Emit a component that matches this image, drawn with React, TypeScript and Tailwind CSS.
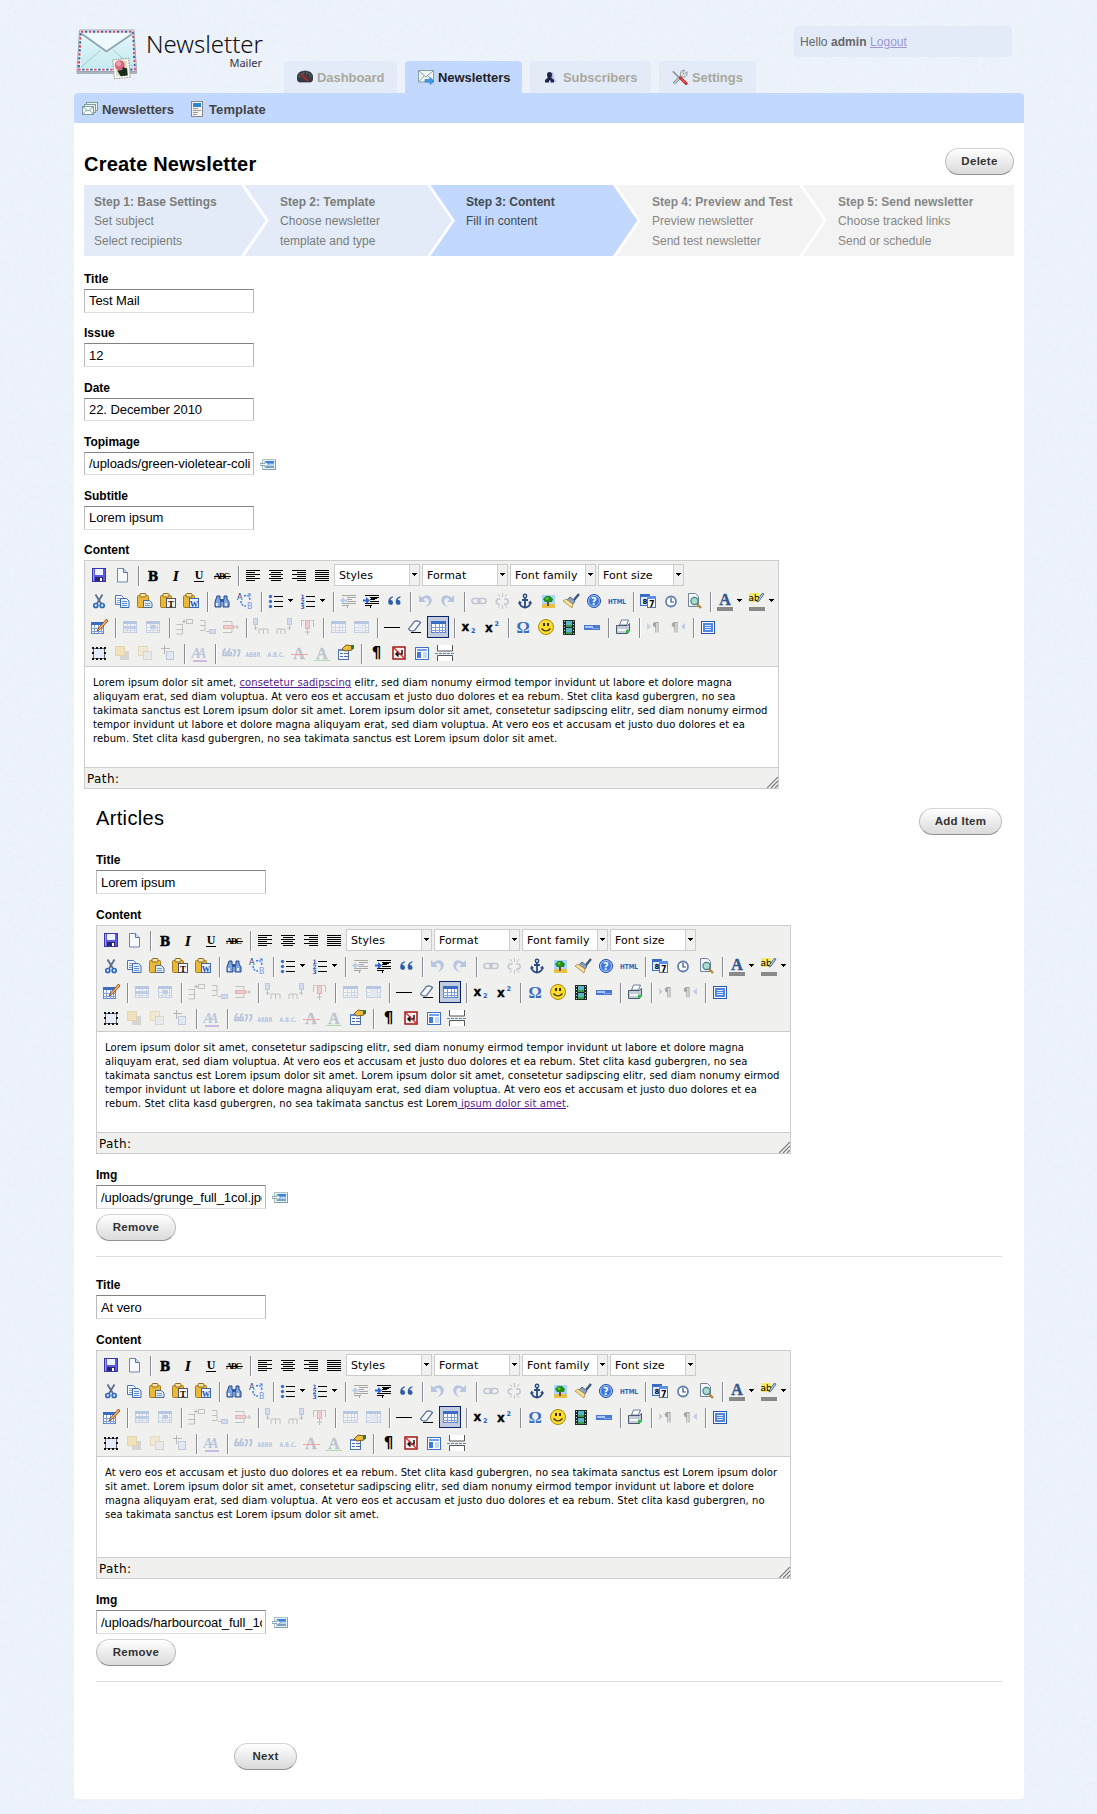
import React from "react";

const SANS = "font-['Liberation_Sans',Arial,sans-serif]";
const VERDANA = "font-['DejaVu_Sans',Verdana,sans-serif]";

const serif = "'Liberation Serif', serif";
const bold = "'DejaVu Serif', serif";
const mono = "'DejaVu Sans', sans-serif";

const R = (x: number, y: number, w: number, h: number, fill: string, key?: string | number) => (
  <rect key={key ?? `${x}-${y}-${w}-${h}`} x={x} y={y} width={w} height={h} fill={fill} shapeRendering="crispEdges" />
);

const lines = (starts: number[], widths: number[]) =>
  starts.map((s, i) => R(s, 5 + i * 2, widths[i], 1, "#000", i));

const clipboard = (
  <>
    <rect x="2.5" y="4.5" width="11" height="12" rx="1" fill="#e9b93c" stroke="#a87b1c" />
    <rect x="5" y="2.5" width="6" height="3.5" rx="1" fill="#f6e3a2" stroke="#8d6b20" />
  </>
);

const table = (x: number, y: number, w: number, h: number, head = "#3b6cc4") => (
  <>
    <rect x={x + 0.5} y={y + 0.5} width={w - 1} height={h - 1} fill="#fff" stroke="#5c83c9" />
    {R(x, y, w, 3, head)}
    {[1, 2, 3].map((i) => R(x + Math.round((w * i) / 4), y + 3, 1, h - 3, "#7f9fda", `v${i}`))}
    {[1, 2].map((i) => R(x, y + 3 + Math.round(((h - 3) * i) / 3), w, 1, "#7f9fda", `h${i}`))}
  </>
);

const cells = (x: number, y: number) => (
  <path d={`M${x} ${y}h10M${x} ${y + 5}h10M${x + 0.5} ${y}v5M${x + 5} ${y}v5M${x + 9.5} ${y}v5`} stroke="#555" fill="none" />
);

const icons: Record<string, React.ReactNode> = {
  save: (
    <>
      <rect x="3.5" y="3.5" width="13" height="13" fill="#5c5ae0" stroke="#3a36a8" />
      {R(6, 4, 8, 6, "#eef2ff")}
      {R(6, 12, 8, 4, "#2a2868")}
      {R(11, 13, 2, 3, "#fff")}
      {R(4, 4, 1, 12, "#9d9bf6")}
    </>
  ),
  newdoc: (
    <>
      <path d="M5.5 3.5h6l4 4v9.500h-10z" fill="#f6faff" stroke="#6d87a8" />
      <path d="M11.500 3.500v4h4" fill="#cfe0f3" stroke="#5c7899" />
    </>
  ),
  bold: <text x="10" y="15.500" fontSize="12.500" fontWeight="900" fontFamily={bold} textAnchor="middle" stroke="#000" strokeWidth=".5">B</text>,
  italic: <text x="10" y="15.500" fontSize="12.500" fontWeight="700" fontStyle="italic" fontFamily={bold} textAnchor="middle">I</text>,
  underline: (
    <>
      <text x="10" y="14" fontSize="12" fontWeight="700" fontFamily={serif} textAnchor="middle">U</text>
      {R(5, 16, 10, 1, "#000")}
    </>
  ),
  strike: (
    <>
      <text x="10" y="14" fontSize="9" fontFamily={serif} fontWeight="700" textAnchor="middle" textLength="16">ABC</text>
      {R(2, 11, 17, 1, "#000")}
    </>
  ),
  left: <>{lines([3, 3, 3, 3, 3, 3], [14, 9, 14, 9, 14, 9])}</>,
  center: <>{lines([3, 5, 3, 5, 3, 5], [14, 10, 14, 10, 14, 10])}</>,
  right: <>{lines([3, 8, 3, 8, 3, 8], [14, 9, 14, 9, 14, 9])}</>,
  full: <>{lines([3, 3, 3, 3, 3, 3], [14, 14, 14, 14, 14, 14])}</>,
  cut: (
    <>
      <path d="M6.500 3.500l5.500 9M13.500 3.500l-5.500 9" stroke="#5a6f8c" strokeWidth="1.800" fill="none" />
      <circle cx="6.800" cy="14.500" r="2" fill="none" stroke="#2a6ac0" strokeWidth="1.700" />
      <circle cx="13.200" cy="14.500" r="2" fill="none" stroke="#2a6ac0" strokeWidth="1.700" />
    </>
  ),
  copy: (
    <>
      <path d="M3.500 4.500h6l2 2v7h-8z" fill="#fff" stroke="#4a76bd" />
      <path d="M5 7.500h4M5 9.500h4M5 11.500h3" stroke="#7d9fd6" />
      <path d="M8.500 7.500h6l2.500 2.500v6.500h-8.500z" fill="#eaf2ff" stroke="#3c69b4" />
      <path d="M10 10.500h5M10 12.500h5M10 14.500h5" stroke="#5d8ad0" />
    </>
  ),
  paste: (
    <>
      {clipboard}
      <path d="M8.500 9.500h6l2.500 2.500v4.500h-8.500z" fill="#dfeaf7" stroke="#4c6c97" />
      <path d="M10 12.500h5M10 14.500h5" stroke="#7e9ac0" />
    </>
  ),
  pastetext: (
    <>
      {clipboard}
      <rect x="8.500" y="7.500" width="9" height="9" fill="#f6f6f6" stroke="#555" />
      <text x="13" y="15.500" fontSize="9" fontWeight="700" fontFamily={serif} textAnchor="middle">T</text>
    </>
  ),
  pasteword: (
    <>
      {clipboard}
      <rect x="8.500" y="7.500" width="9" height="9" fill="#eaf3ff" stroke="#3a6ab5" />
      <text x="13" y="15.500" fontSize="8.500" fontWeight="700" fontFamily={serif} fill="#1c52b0" textAnchor="middle">W</text>
    </>
  ),
  find: (
    <>
      <path d="M5 5h3v3l1 2v6H3v-5zM12 5h3v3l2 3v5h-6v-6l1-2z" fill="#7fa3dd" stroke="#23478c" />
      {R(8, 8, 4, 3, "#2f5aa8")}
      {R(4, 12, 2, 3, "#dfeaff")}
      {R(13, 12, 2, 3, "#dfeaff")}
    </>
  ),
  replace: (
    <>
      <text x="2" y="9" fontSize="8" fontFamily={mono} fill="#23478c">A</text>
      <text x="12" y="18" fontSize="8" fontFamily={mono} fill="#7a9be0">B</text>
      <path d="M9 5q5-2 6 4M6 10q0 5 5 5" stroke="#3d78e6" strokeWidth="1.400" strokeDasharray="2 1.200" fill="none" />
      <path d="M12.500 2.500h3v3z" fill="#3d78e6" />
    </>
  ),
  bullist: (
    <>
      {[5, 10, 15].map((y) => (
        <React.Fragment key={y}>
          <circle cx="4.500" cy={y + 0.5} r="1.700" fill="#3b6fc9" />
          {R(8, y, 9, 1, "#000")}
        </React.Fragment>
      ))}
    </>
  ),
  numlist: (
    <>
      {[5, 10, 15].map((y, i) => (
        <React.Fragment key={y}>
          <text x="2.500" y={y + 2.500} fontSize="6" fontWeight="700" fontFamily={mono} fill="#2c5fc0">{i + 1}</text>
          {R(8, y, 9, 1, "#000")}
        </React.Fragment>
      ))}
    </>
  ),
  outdent: (
    <>
      {[4, 6, 8, 10, 12, 14].map((y, i) => R([4, 9, 9, 9, 4, 4][i], y, [14, 9, 5, 9, 14, 7][i], 1, "#000", y))}
      {R(9, 15, 1, 2, "#000")}
      <path d="M2 9.500l4-3.500v2.500h3v2h-3V13z" fill="#3d78e6" />
    </>
  ),
  indent: (
    <>
      {[4, 6, 8, 10, 12, 14].map((y, i) => R([4, 9, 9, 9, 4, 4][i], y, [14, 9, 5, 9, 14, 7][i], 1, "#000", y))}
      {R(9, 15, 1, 2, "#000")}
      {R(10, 7, 6, 1, "#000")}
      <path d="M9 9.500L5 6v2.500H2v2h3V13z" fill="#2f63d0" />
    </>
  ),
  quote: (
    <path d="M9 5.200Q4 6 4.200 11.500a2.400 2.400 0 1 0 2-2.400Q6.500 7 9 6.200zM16.500 5.200q-5 .8-4.800 6.300a2.400 2.400 0 1 0 2-2.400q.3-2.100 2.800-2.900z" fill="#2f5da8" />
  ),
  undo: <path d="M4 4v7h7l-2.500-2.500q3-3 5 .5 1.500 4-4 7.500 9-3 7-9-3-6-10-1z" fill="#3465c8" />,
  redo: <path d="M16 4v7H9l2.500-2.500q-3-3-5 .5-1.500 4 4 7.500-9-3-7-9 3-6 10-1z" fill="#3465c8" />,
  link: (
    <>
      <rect x="3" y="7.500" width="8" height="5" rx="2.500" fill="none" stroke="#54699a" strokeWidth="1.600" />
      <rect x="9" y="7.500" width="8" height="5" rx="2.500" fill="none" stroke="#54699a" strokeWidth="1.600" />
    </>
  ),
  unlink: (
    <>
      <path d="M8.500 8H5.500q-2.500 2.500 0 5h2M12 8h3q2.500 2.500 0 5h-3" fill="none" stroke="#54699a" strokeWidth="1.600" />
      <path d="M10.500 2v4M6 3l2 3M15 3l-2 3M10.500 14v4M6 17l2-3M15 17l-2-3" stroke="#666" />
    </>
  ),
  anchor: (
    <>
      <circle cx="10" cy="5" r="1.700" fill="none" stroke="#2a4c80" strokeWidth="1.400" />
      <path d="M10 7v9M7 9h6M4.500 11q.5 5 5.500 5.500 5-.5 5.500-5.500" fill="none" stroke="#2a4c80" strokeWidth="1.800" />
      <path d="M3 13l1.500-3.500L7 12zM17 13l-1.500-3.500L13 12z" fill="#2a4c80" />
    </>
  ),
  image: (
    <>
      {R(4, 4, 13, 13, "#a9d4ff")}
      {R(4, 13, 13, 4, "#e7c04a")}
      {R(9, 10, 2, 5, "#7a4a14")}
      <path d="M5 8l3-3h4l3 3-1 3H7z" fill="#238a1b" />
      <circle cx="9" cy="7.500" r="1.500" fill="#57c63c" />
    </>
  ),
  cleanup: (
    <>
      <path d="M18 3l-5 6" stroke="#3f5878" strokeWidth="2.400" />
      <path d="M9 6l5 4-2 3-6-4z" fill="#8aa3c6" stroke="#4c6488" />
      <path d="M5 8l7 5-1 4-9-7z" fill="#f3dea0" stroke="#b08b3a" strokeWidth=".8" />
    </>
  ),
  help: (
    <>
      <circle cx="10" cy="10" r="6.500" fill="#3b78e0" stroke="#1d4ca8" />
      <circle cx="10" cy="10" r="5.500" fill="none" stroke="#cfe0ff" strokeWidth=".8" />
      <text x="10" y="13.800" fontSize="10" fontWeight="700" fontFamily={mono} fill="#fff" textAnchor="middle">?</text>
    </>
  ),
  html: <text x="10" y="13" fontSize="7" fontWeight="700" fontFamily={mono} fill="#2b62b8" textAnchor="middle" textLength="18" lengthAdjust="spacingAndGlyphs">HTML</text>,
  date: (
    <>
      <rect x="2.500" y="3.500" width="9" height="11" fill="#e5eeff" stroke="#3b6cc4" />
      {R(2, 3, 10, 3, "#3b6cc4")}
      <text x="4.500" y="13" fontSize="7" fontWeight="700" fontFamily={mono}>8</text>
      <rect x="9.500" y="5.500" width="8" height="11" fill="#fff" stroke="#5b6f90" />
      {R(9, 5, 9, 3, "#5d90e8")}
      <text x="11" y="15.500" fontSize="8" fontWeight="700" fontFamily={mono}>7</text>
    </>
  ),
  time: (
    <>
      <circle cx="10" cy="10.500" r="5" fill="#fff" stroke="#6480b0" strokeWidth="1.800" />
      <path d="M10 7v4h3" fill="none" stroke="#33507f" strokeWidth="1.200" />
    </>
  ),
  preview: (
    <>
      <path d="M4.500 2.500h7l3 3v10h-10z" fill="#f4f8fc" stroke="#72849c" />
      <path d="M12 12l5 5" stroke="#b98634" strokeWidth="2.400" />
      <circle cx="10.500" cy="10" r="3.600" fill="#a9dcd0" stroke="#4d7d86" strokeWidth="1.200" />
    </>
  ),
  fore: (
    <>
      <text x="10" y="13.500" fontSize="16" fontWeight="700" fontFamily={serif} fill="#33578f" stroke="#33578f" strokeWidth=".4" textAnchor="middle">A</text>
      {R(2, 16, 16, 4, "#8a8a8a")}
    </>
  ),
  back: (
    <>
      {R(2, 2, 10, 9, "#f5e96a")}
      <text x="1.500" y="10" fontSize="9" fontFamily={mono}>ab</text>
      <path d="M17 3l-5 7-2 1 1-2.500 4-6z" fill="#cfe0f3" stroke="#48628a" />
      {R(2, 16, 16, 4, "#8a8a8a")}
    </>
  ),
  table: (
    <>
      {table(2, 5, 13, 12)}
      <path d="M17.500 2l-8 9-1.500 3 3-1.500 8-8.500z" fill="#eab06a" stroke="#7d3c14" strokeWidth=".8" />
    </>
  ),
  rowprops: <>{table(3, 4, 14, 12)}{R(3, 9, 14, 3, "#4d7fd8")}</>,
  cellprops: <>{table(3, 4, 14, 12)}{R(8, 8, 5, 4, "#4d7fd8")}</>,
  rowbefore: <path d="M2.500 7.500h6M2.500 12.500h6M2.500 17h6M8.500 7v10M8 4.500h4M10 2.500v4M12.500 2.500h6v4h-6z" stroke="#555" fill="none" />,
  rowafter: <><path d="M3 3.500h5M3 8.500h5M3 13.500h5M8 3.500v10M9 14.500h4" stroke="#555" fill="none" /><rect x="12.500" y="12.500" width="6" height="4" fill="#8fb1ef" stroke="#4c70b8" /></>,
  delrow: <><path d="M3 4.500h9M3 15.500h9M12 4.500v3M12 12.500v3M14 10h5M17 8v4" stroke="#555" fill="none" /><rect x="3.500" y="8.500" width="10" height="3" fill="#f08080" stroke="#c03030" /></>,
  colbefore: <><rect x="2.500" y="1.500" width="4" height="6" fill="#8fb1ef" stroke="#4c70b8" /><path d="M4.500 8v5M3 11h4M8 17v-5h9v5M12.500 12v5" stroke="#555" fill="none" /></>,
  colafter: <><rect x="13.500" y="1.500" width="4" height="6" fill="#8fb1ef" stroke="#4c70b8" /><path d="M15.500 8v5M13 11h4M3 17v-5h8v5M7 12v5" stroke="#555" fill="none" /></>,
  delcol: <><rect x="8.500" y="3.500" width="4" height="8" fill="#f08080" stroke="#c03030" /><path d="M4.500 10V3.500h3M16.500 10V3.500h-3M10.500 12v6M8 15h5" stroke="#555" fill="none" /></>,
  splitcells: <>{table(3, 4, 15, 12)}</>,
  mergecells: <>{table(3, 4, 15, 12)}{R(7, 8, 7, 7, "#c6d8f8")}</>,
  hr: <>{R(2, 10, 16, 1, "#000")}</>,
  eraser: (
    <>
      <path d="M3.500 12l6-7.500q3-1.500 6 1l-6 8q-4 1.500-6-1.500z" fill="#f2f7ff" stroke="#50658a" strokeWidth="1.200" />
      {R(6, 15, 10, 1, "#000")}
    </>
  ),
  visual: <>{table(3, 4, 15, 12)}</>,
  sub: (
    <>
      <text x="2.500" y="14" fontSize="12" fontWeight="700" fontFamily={mono} stroke="#000" strokeWidth=".3">x</text>
      <text x="12" y="16" fontSize="6.500" fontWeight="700" fontFamily={mono} fill="#2c5fc0">2</text>
    </>
  ),
  sup: (
    <>
      <text x="3" y="15" fontSize="12" fontWeight="700" fontFamily={mono} stroke="#000" strokeWidth=".3">x</text>
      <text x="12.500" y="8.500" fontSize="6.500" fontWeight="700" fontFamily={mono} fill="#2c5fc0">2</text>
    </>
  ),
  omega: <text x="10" y="15.500" fontSize="16.500" fontWeight="700" fontFamily={serif} fill="#3a6cc4" textAnchor="middle">Ω</text>,
  smile: (
    <>
      <circle cx="10" cy="10" r="7.500" fill="#fcdc2c" stroke="#a98a10" />
      {R(7, 6, 2, 3, "#3a2c00")}
      {R(11, 6, 2, 3, "#3a2c00")}
      <path d="M5.500 11.500q4.500 5 9 0" fill="none" stroke="#3a2c00" strokeWidth="1.200" />
    </>
  ),
  media: (
    <>
      {R(4, 3, 12, 15, "#1c2b26")}
      {R(7, 4, 6, 6, "#58b7c6")}
      {R(7, 11, 6, 6, "#58b7c6")}
      {R(7, 8, 6, 2, "#3f9c4c", "g1")}
      {R(7, 15, 6, 2, "#3f9c4c", "g2")}
      {[4, 7, 10, 13, 16].map((y) => R(5, y, 1, 1, "#cfd8d5", y))}
      {[4, 7, 10, 13, 16].map((y) => R(14, y, 1, 1, "#cfd8d5", `r${y}`))}
    </>
  ),
  advhr: (
    <>
      {R(2, 8, 16, 5, "#4a78d0")}
      {R(3, 9, 8, 2, "#a9c6ff")}
      {R(10, 11, 7, 1, "#7fa8f0")}
    </>
  ),
  print: (
    <>
      <path d="M6.500 8l2-5h7l-2 5z" fill="#fff" stroke="#6a7f9c" />
      <path d="M3.500 8.500h11l2-2v7l-2 3h-11z" fill="#c3cbd6" stroke="#48586e" />
      {R(5, 12, 8, 2, "#f7f7f7")}
      {R(13, 13, 3, 3, "#35b94a")}
    </>
  ),
  ltr: <><path d="M3 6l4 3.500-4 3.500z" fill="#6a90cf" /><text x="8" y="14" fontSize="12" fontWeight="700" fontFamily={mono}>¶</text></>,
  rtl: <><path d="M18 6l-4 3.500 4 3.500z" fill="#4a7ad8" /><text x="4" y="14" fontSize="12" fontWeight="700" fontFamily={mono}>¶</text></>,
  fullscreen: (
    <>
      <rect x="3.500" y="4.500" width="13" height="12" fill="#fff" stroke="#2a56b0" />
      {R(5, 6, 10, 9, "#4f86e6")}
      {[8, 10, 12].map((y) => R(7, y, 6, 1, "#dbe7ff", y))}
    </>
  ),
  layer: (
    <>
      <rect x="4.500" y="5.500" width="11" height="10" fill="#e3edff" stroke="#666" />
      {[[3, 4], [15, 4], [3, 15], [15, 15], [7, 4], [11, 4], [7, 15], [11, 15], [3, 9], [15, 9]].map(([x, y]) => R(x, y, 2, 2, "#111"))}
    </>
  ),
  forward: <>{R(8, 8, 9, 9, "#9a9a9a")}<rect x="3.500" y="3.500" width="9" height="9" fill="#f3c64a" stroke="#c99a2a" /></>,
  backward: <><rect x="3.500" y="3.500" width="9" height="9" fill="#f3dc9a" stroke="#c9aa5a" />{R(8, 8, 9, 9, "#b99a5a")}{R(9, 9, 7, 7, "#d8dce8")}</>,
  absolute: <><rect x="8.500" y="8.500" width="7" height="8" fill="#c7dcff" stroke="#4c70b8" /><path d="M3 5.500h9M6.500 2v9" stroke="#333" /></>,
  styleprops: (
    <>
      <text x="10" y="15" fontSize="14" fontStyle="italic" fontWeight="700" fontFamily={serif} fill="#4468b0" textAnchor="middle" textLength="15">AA</text>
      {R(4, 17, 14, 2, "#7a3cc8")}
    </>
  ),
  cite: <path d="M5.500 5.500q-2.500 2-2.500 7h3v-3H4.500M10.500 5.500q-2.500 2-2.500 7h3v-3H9.500M12.500 7h2.500q.5 4-2 6.500M17 7h2.500q.5 4-2 6.500" stroke="#2d5fae" strokeWidth="1.700" fill="none" />,
  abbr: <text x="10" y="13.500" fontSize="6.500" fontWeight="700" fontFamily={mono} fill="#2b5fb8" textAnchor="middle" textLength="15" lengthAdjust="spacingAndGlyphs">ABBR</text>,
  acronym: <text x="10" y="13.500" fontSize="6.500" fontWeight="700" fontFamily={mono} fill="#2b5fb8" textAnchor="middle" textLength="17" lengthAdjust="spacingAndGlyphs">A.B.C.</text>,
  del: (
    <>
      <text x="10" y="15.500" fontSize="16" fontWeight="700" fontFamily={serif} fill="#4a5f84" stroke="#4a5f84" strokeWidth=".4" textAnchor="middle">A</text>
      {R(2, 11, 17, 1, "#ff0000")}
    </>
  ),
  ins: (
    <>
      <text x="10" y="15.500" fontSize="16" fontWeight="700" fontFamily={serif} fill="#4a6888" stroke="#4a6888" strokeWidth=".4" textAnchor="middle">A</text>
      {R(2, 17, 16, 1, "#18b018")}
    </>
  ),
  attribs: (
    <>
      <rect x="3.500" y="6.500" width="10" height="10" fill="#f3f8ff" stroke="#4c70a8" />
      {R(3, 6, 11, 2, "#5c8ad8")}
      <path d="M5 10.500h3M9 10.500h4M5 13.500h3M9 13.500h4" stroke="#4c6ca0" />
      <path d="M7 6l4-4 7 1-1 4-7 1z" fill="#ecbd3f" stroke="#7c5a14" />
      {R(16, 2, 3, 4, "#2e7b35")}
    </>
  ),
  visualchars: <text x="10.500" y="15" fontSize="15" fontWeight="700" fontFamily={mono} textAnchor="middle">¶</text>,
  nonbreaking: (
    <>
      <rect x="4" y="4" width="12" height="12" fill="#fbeeee" stroke="#a01818" strokeWidth="1.500" />
      <path d="M13 7v4H8M9.500 8.500L7 11l2.500 2.500" fill="none" stroke="#111" strokeWidth="1.500" />
      <path d="M4 4l12 12" stroke="#d02828" strokeWidth="1.300" />
    </>
  ),
  template: (
    <>
      <rect x="3.500" y="4.500" width="13" height="12" fill="#fff" stroke="#3f70c4" />
      {R(5, 6, 10, 2, "#6fa0ee")}
      {R(5, 9, 4, 6, "#3f7ae0")}
      {R(11, 9, 4, 6, "#c3d8f8")}
    </>
  ),
  pagebreak: (
    <>
      <path d="M2.500 2v6h15V2M2.500 18v-5.500h15V18" fill="#fff" stroke="#555" />
      <path d="M0 10.500h20" stroke="#5a86c0" strokeDasharray="3 1" />
    </>
  ),
};

const toolbar: string[][] = [
  ["save", "newdoc", "|", "bold", "italic", "underline", "strike", "|", "left", "center", "right", "full", "#Styles", "#Format", "#Font family", "#Font size"],
  ["cut", "copy", "paste", "pastetext", "pasteword", "|", "find", "replace", "|", "bullist>", "numlist>", "|", "~outdent", "indent", "quote", "|", "~undo", "~redo", "|", "~link", "~unlink", "anchor", "image", "cleanup", "help", "html", "|", "date", "time", "preview", "|", "fore>", "back>"],
  ["table", "|", "~rowprops", "~cellprops", "|", "~rowbefore", "~rowafter", "~delrow", "|", "~colbefore", "~colafter", "~delcol", "|", "~splitcells", "~mergecells", "|", "hr", "eraser", "*visual", "|", "sub", "sup", "|", "omega", "smile", "media", "advhr", "|", "print", "|", "~ltr", "~rtl", "|", "fullscreen"],
  ["layer", "~forward", "~backward", "~absolute", "|", "~styleprops", "|", "~cite", "~abbr", "~acronym", "~del", "~ins", "attribs", "|", "visualchars", "nonbreaking", "template", "pagebreak"],
];

function Arrow() {
  return (
    <svg width="7" height="4" viewBox="0 0 7 4" shapeRendering="crispEdges">
      <path d="M1 0h5v1H1zM2 1h3v1H2zM3 2h1v1H3z" fill="#000" />
    </svg>
  );
}

function Tool({ spec }: { spec: string }) {
  if (spec === "|") {
    return <span className="mt-0.5 mr-0.5 ml-1 h-5 w-0.5 border-l border-r border-l-[#8b8b94] border-r-white" />;
  }
  if (spec[0] === "#") {
    return (
      <button className={`mr-0.5 flex h-[22px] w-[86px] border border-[#ccc] bg-white text-left text-[11px] ${VERDANA}`}>
        <span className="flex-1 pl-1 leading-[22px] tracking-[0.1px] whitespace-nowrap">{spec.slice(1)}</span>
        <span className="flex h-5 w-2.5 items-center justify-center border-l border-[#ccc] bg-[#f0f0ee]">
          <Arrow />
        </span>
      </button>
    );
  }
  const split = spec.endsWith(">");
  const disabled = spec[0] === "~";
  const active = spec[0] === "*";
  const name = spec.replace(/[~*>]/g, "");
  return (
    <button className={split ? "flex w-8 items-center" : "mr-px flex"}>
      <span className={`size-[22px] border ${active ? "border-[#0a246a] bg-[#c2cbe0]" : "border-transparent"}`}>
        <svg width="20" height="20" viewBox="0 0 20 20" className={disabled ? "opacity-30" : ""} overflow="visible">
          {icons[name]}
        </svg>
      </span>
      {split && <Arrow />}
    </button>
  );
}

function Editor({ children }: { children: React.ReactNode }) {
  return (
    <div className={`flex h-[229px] w-[695px] flex-col border border-[#ccc] bg-white text-black ${VERDANA}`}>
      <div className="h-[106px] border-b border-[#ccc] bg-[#f0f0ee] pt-[3px] pl-[3px]">
        {toolbar.map((row, i) => (
          <div key={i} className="flex h-[26px] items-start">
            {row.map((t, j) => (
              <Tool key={j} spec={t} />
            ))}
          </div>
        ))}
      </div>
      <div className="flex-1 pt-[9px] pl-2 text-[10px] leading-[14px] tracking-[0.086px] whitespace-nowrap">{children}</div>
      <div className="relative h-[21px] border-t border-[#ccc] bg-[#f0f0ee] pl-0.5 text-[12px] leading-[22px] tracking-[0.4px]">
        Path:
        <svg className="absolute right-0 bottom-0" width="11" height="11" viewBox="0 0 11 11">
          <path d="M0 11L11 0M4 11l7-7M8 11l3-3" stroke="#777" strokeWidth="1.200" />
        </svg>
      </div>
    </div>
  );
}

function Label({ children }: { children: React.ReactNode }) {
  return <label className="block h-[17px] text-[12px] leading-[15px] font-bold text-black">{children}</label>;
}

function BrowseIcon() {
  return (
    <svg className="mt-[7px] ml-1.5" width="16" height="11" viewBox="0 0 16 11">
      <rect x="2.500" y=".5" width="13" height="10" fill="#e9f3f3" stroke="#a9c4c6" />
      <path d="M15.500 1v9.500h-13" fill="none" stroke="#7fa0aa" />
      {R(5, 2, 9, 7, "#6ea6ee")}
      {R(5, 2, 9, 2, "#3f7fe0")}
      {R(5, 5, 9, 2, "#b4d4f6")}
      {R(5, 7, 9, 2, "#7f9fc4")}
      <path d="M0 4.500h5V2.500L8.500 5.500 5 8.500V6.500H0z" fill="#f3fbfa" stroke="#6f949c" strokeWidth=".8" />
    </svg>
  );
}

function Field({ label, value, browse }: { label: string; value: string; browse?: boolean }) {
  return (
    <div className="h-[54.25px]">
      <Label>{label}</Label>
      <div className="flex">
        <input
          defaultValue={value}
          className="h-[23.500px] w-[170px] border border-t-[#828282] border-r-[#bbb] border-b-[#ddd] border-l-[#bbb] bg-white pr-[3px] pl-1 text-[13px] tracking-[-0.07px] text-black outline-none"
        />
        {browse && <BrowseIcon />}
      </div>
    </div>
  );
}

function Pill({ children, className }: { children: React.ReactNode; className: string }) {
  return (
    <button
      className={`h-[27px] shrink-0 rounded-[14px] border border-[#bbb] border-t-[#d4d4d4] border-b-[#909090] bg-linear-to-b from-white to-[#dadada] text-[11.500px] leading-[25px] font-bold tracking-[0.3px] text-[#333] ${className}`}
    >
      {children}
    </button>
  );
}

const steps = [
  { title: "Step 1: Base Settings", a: "Set subject", b: "Select recipients", box: "bg-[#e3ebf8] text-[#7b7d7a]", own: "#e3ebf8" },
  { title: "Step 2: Template", a: "Choose newsletter", b: "template and type", box: "bg-[#e3ebf8] text-[#7b7d7a]", own: "#e3ebf8" },
  { title: "Step 3: Content", a: "Fill in content", b: "", box: "bg-[#c3d8ff] text-[#3f4a4a]", own: "#c3d8ff" },
  { title: "Step 4: Preview and Test", a: "Preview newsletter", b: "Send test newsletter", box: "bg-[#f3f3f3] text-[#868886]", own: "#f3f3f3" },
  { title: "Step 5: Send newsletter", a: "Choose tracked links", b: "Send or schedule", box: "bg-[#f3f3f3] text-[#868886]", own: "#f3f3f3" },
];

function Steps() {
  return (
    <div className="flex h-[71px]">
      {steps.map((s, i) => (
        <div key={s.title} className={`relative w-[186px] pt-2 pl-2.5 text-[12px] leading-5 whitespace-nowrap ${s.box}`}>
          <div className="h-[19px] leading-[19px] font-bold">{s.title}</div>
          <div className="-mt-px tracking-[0.04px]">{s.a}</div>
          <div>{s.b}</div>
          {i < steps.length - 1 && (
            <svg className="absolute top-0 right-0" width="29" height="71" viewBox="0 0 29 71">
              <rect width="29" height="71" fill={steps[i + 1].own} />
              <path d="M0 0l24.500 35.500L0 71z" fill={s.own} />
              <path d="M0 0h3.500L28 35.500 3.500 71H0l24.500-35.500z" fill="#fff" />
            </svg>
          )}
        </div>
      ))}
    </div>
  );
}

function Logo() {
  return (
    <div className="flex w-[210px]">
      <svg className="mt-7 ml-0.5" width="62" height="52" viewBox="0 0 62 52">
        <defs>
          <linearGradient id="paper" x1="0" y1="0" x2="0" y2="1">
            <stop offset="0" stopColor="#e2f6fb" />
            <stop offset="1" stopColor="#c5ebf0" />
          </linearGradient>
        </defs>
        <path d="M3.500 2h54.500l3 43H.5z" fill="#7d8b92" opacity=".6" transform="translate(0 1)" />
        <path d="M3.500 2h54.500l2.500 41.500H1z" fill="#eef9fb" stroke="#8d9da6" strokeWidth=".8" />
        <path d="M4.800 3.800h52l2 37.800H2.700z" fill="none" stroke="#d94a5c" strokeWidth="2" strokeDasharray="2.500 5.500" />
        <path d="M4.800 3.800h52l2 37.800H2.700z" fill="none" stroke="#3a62ae" strokeWidth="2" strokeDasharray="2.500 5.500" strokeDashoffset="4" />
        <path d="M6 5h50l1.500 35.500H4.500z" fill="url(#paper)" />
        <path d="M5 39l20-17M57 39L37 22" stroke="#aacbd1" fill="none" />
        <path d="M6 5l24.500 18L56 5z" fill="#eefafd" />
        <path d="M6 6l24.500 17.500L56 6" fill="none" stroke="#8fa3ae" strokeWidth="1.800" />
        <g transform="rotate(-5 46 40)">
          <rect x="37.500" y="31" width="16" height="19" fill="#faf8f0" stroke="#8e8e8e" strokeWidth="1" strokeDasharray="1.500 1" />
          <rect x="39.500" y="33" width="12" height="15" fill="#dfe0c8" />
          <circle cx="44" cy="37" r="5" fill="#d8647e" />
          <circle cx="43" cy="35.500" r="2.500" fill="#efa0b2" />
          <path d="M41 42l3 6h7v-7l-4-2-1 3z" fill="#1a2c1c" />
        </g>
      </svg>
      <div className="mt-7 ml-2 w-[116px] text-right font-['Noto_Sans',sans-serif] text-[#111]">
        <div className="text-[24px] leading-[32px] font-light whitespace-nowrap">Newsletter</div>
        <div className="-mt-0.5 text-[11px] leading-[10px] text-[#334]">Mailer</div>
      </div>
    </div>
  );
}

const tabIcons = {
  dashboard: (
    <svg width="16" height="16" viewBox="0 0 16 16">
      <path d="M0 8q1-6 8-6t8 6q0 4-2 5H2Q0 12 0 8z" fill="#3a3d42" stroke="#222" strokeWidth=".6" />
      <path d="M2 8q1-4 6-4t6 4" fill="none" stroke="#9a9da2" strokeDasharray="1 2" />
      <path d="M4 5l7 7" stroke="#e02020" strokeWidth="1.300" />
    </svg>
  ),
  newsletters: (
    <svg width="16" height="16" viewBox="0 0 16 16">
      <rect x=".5" y="1.500" width="15" height="11.500" fill="#eef4f4" stroke="#8aa0a4" />
      <path d="M1 2l7 6 7-6M1 12.500L6 7M15 12.500L10 7" fill="none" stroke="#8aa0a4" />
      <path d="M7 10.500h5V8.500l4 3.500-4 3.500V13H7z" fill="#3f9be8" stroke="#1f6ec0" strokeWidth=".6" />
    </svg>
  ),
  subscribers: (
    <svg width="16" height="16" viewBox="0 0 16 16">
      <path d="M8 3.500q3-1 3 2v3l2.500 4.500H9z" fill="#a9c4e4" />
      <circle cx="6.500" cy="5.500" r="2.500" fill="#23234a" />
      <path d="M4.500 6h4v3l2.500 2v2.500H7.500v-2h-1.500v2H2V11l2.500-2z" fill="#23234a" />
    </svg>
  ),
  settings: (
    <svg width="17" height="17" viewBox="0 0 17 17">
      <path d="M1 2l8 8" stroke="#8b9094" strokeWidth="1.600" />
      <path d="M2 15L12 5" stroke="#7c8286" strokeWidth="3" />
      <path d="M2 15L12 5" stroke="#dde1e3" strokeWidth="1.200" />
      <path d="M15.500 2.500l-2.500 2.500-1.500-1.500 2-2.500q-4-1-4.500 3t3.500 4 3.500-5.500z" fill="#dde1e3" stroke="#7c8286" strokeWidth=".8" />
      <path d="M9 9l6 6" stroke="#c41f1f" strokeWidth="3" strokeLinecap="round" />
      <path d="M9.500 9.500l5 5" stroke="#f58080" strokeWidth="1" />
    </svg>
  ),
};

function Tab({ icon, label, width, active }: { icon: React.ReactNode; label: string; width: string; active?: boolean }) {
  return (
    <a className={`flex h-8 items-center gap-1 rounded-t-[4px] pl-[13px] text-[13px] font-bold tracking-[-0.06px] ${width} ${active ? "bg-[#c3d8ff] text-[#222]" : "bg-[#e3ebf8] text-[#aaa89d]"}`}>
      <span className="flex w-4">{icon}</span>
      <span className="mt-0.5">{label}</span>
    </a>
  );
}

function Article({ title, img, children }: { title: string; img: string; children: React.ReactNode }) {
  return (
    <section className="h-[425px]">
      <div className="h-[55px]">
        <Field label="Title" value={title} />
      </div>
      <Label>Content</Label>
      <Editor>{children}</Editor>
      <div className="mt-3.5 h-[46px]">
        <Field label="Img" value={img} browse />
      </div>
      <Pill className="w-20">Remove</Pill>
      <hr className="mt-[15px] border-[#ddd]" />
    </section>
  );
}

const Link = ({ children }: { children: React.ReactNode }) => <a className="text-[#551a8b] underline">{children}</a>;

export default function App() {
  return (
    <div className={`relative h-[1814px] w-[1097px] overflow-hidden bg-[#eef3fb] ${SANS}`}>
      <svg className="absolute inset-0" width="1097" height="1814">
        <filter id="grain" x="0" y="0" width="100%" height="100%">
          <feTurbulence type="fractalNoise" baseFrequency="0.28" numOctaves="3" seed="4" stitchTiles="stitch" />
          <feColorMatrix values="0 0 0 0 .8  0 0 0 0 .86  0 0 0 0 .94  1.300 0 0 0 -.45" />
        </filter>
        <rect width="1097" height="1814" filter="url(#grain)" />
      </svg>
      <div className="relative ml-[74px] w-[950px]">
        <header className="flex h-[93px]">
          <Logo />
          <nav className="flex items-end gap-2">
            <Tab icon={tabIcons.dashboard} label="Dashboard" width="w-[113px]" />
            <Tab icon={tabIcons.newsletters} label="Newsletters" width="w-[117px]" active />
            <Tab icon={tabIcons.subscribers} label="Subscribers" width="w-[121px]" />
            <Tab icon={tabIcons.settings} label="Settings" width="w-[97px]" />
          </nav>
          <div className="mt-[26px] mr-3 ml-auto h-[31px] w-[218px] rounded-[4px] bg-[#e3ebf8] pl-1.5 text-[12px] leading-8 tracking-[0.05px] text-[#666]">
            Hello <b>admin</b> <a className="text-[#9d97d6] underline">Logout</a>
          </div>
        </header>
        <nav className="flex h-[30px] rounded-t-[4px] bg-[#c3d8ff] pl-2 text-[13px] leading-[33px] font-bold text-[#444]">
          <svg className="mt-2 mr-1" width="16" height="16" viewBox="0 0 16 16">
            <rect x="4.500" y="1.500" width="11" height="8" fill="#eef6f4" stroke="#7f9a9a" />
            <rect x="2.500" y="3.500" width="11" height="8" fill="#eef6f4" stroke="#7f9a9a" />
            <rect x=".5" y="5.500" width="11" height="8" fill="#f4faf8" stroke="#7f9a9a" />
            <path d="M1 6l5 4 5-4M1 13l3.500-4M11 13L7.500 9" fill="none" stroke="#8aa5a5" />
          </svg>
          <span className="w-[89px] tracking-[-0.1px]">Newsletters</span>
          <svg className="mt-2 mr-1.5" width="12" height="16" viewBox="0 0 12 16">
            <rect x=".5" y=".5" width="11" height="15" fill="#f4f4f2" stroke="#888" />
            {R(2, 2, 8, 4, "#2f86d0")}
            {R(2, 7, 5, 1, "#999")}
            {R(2, 9, 8, 1, "#999")}
            {R(2, 11, 5, 1, "#999")}
            {R(2, 13, 4, 1, "#999")}
          </svg>
          <span className="tracking-[0.1px]">Template</span>
        </nav>
        <main className="h-[1676px] rounded-b-[4px] bg-white px-2.5">
          <div className="flex h-[62px] justify-between pt-[25px]">
            <h1 className="mt-1 text-[20px] leading-[24px] font-bold tracking-[0.2px] text-black">Create Newsletter</h1>
            <Pill className="w-[69px]">Delete</Pill>
          </div>
          <Steps />
          <div className="pt-4">
            <Field label="Title" value="Test Mail" />
            <Field label="Issue" value="12" />
            <Field label="Date" value="22. December 2010" />
            <Field label="Topimage" value="/uploads/green-violetear-colibri.jpg" browse />
            <Field label="Subtitle" value="Lorem ipsum" />
            <Label>Content</Label>
            <Editor>
              <p>Lorem ipsum dolor sit amet, <Link>consetetur sadipscing</Link> elitr, sed diam nonumy eirmod tempor invidunt ut labore et dolore magna</p>
              <p>aliquyam erat, sed diam voluptua. At vero eos et accusam et justo duo dolores et ea rebum. Stet clita kasd gubergren, no sea</p>
              <p>takimata sanctus est Lorem ipsum dolor sit amet. Lorem ipsum dolor sit amet, consetetur sadipscing elitr, sed diam nonumy eirmod</p>
              <p>tempor invidunt ut labore et dolore magna aliquyam erat, sed diam voluptua. At vero eos et accusam et justo duo dolores et ea</p>
              <p>rebum. Stet clita kasd gubergren, no sea takimata sanctus est Lorem ipsum dolor sit amet.</p>
            </Editor>
          </div>
          <div className="px-3">
            <div className="flex h-16 justify-between pt-[19px]">
              <h2 className="-mt-0.5 text-[20px] leading-[24px] tracking-[0.35px] text-black">Articles</h2>
              <Pill className="w-[83px]">Add Item</Pill>
            </div>
            <Article title="Lorem ipsum" img="/uploads/grunge_full_1col.jpg">
              <p>Lorem ipsum dolor sit amet, consetetur sadipscing elitr, sed diam nonumy eirmod tempor invidunt ut labore et dolore magna</p>
              <p>aliquyam erat, sed diam voluptua. At vero eos et accusam et justo duo dolores et ea rebum. Stet clita kasd gubergren, no sea</p>
              <p>takimata sanctus est Lorem ipsum dolor sit amet. Lorem ipsum dolor sit amet, consetetur sadipscing elitr, sed diam nonumy eirmod</p>
              <p>tempor invidunt ut labore et dolore magna aliquyam erat, sed diam voluptua. At vero eos et accusam et justo duo dolores et ea</p>
              <p>rebum. Stet clita kasd gubergren, no sea takimata sanctus est Lorem<Link> ipsum dolor sit amet</Link>.</p>
            </Article>
            <Article title="At vero" img="/uploads/harbourcoat_full_1col.jpg">
              <p>At vero eos et accusam et justo duo dolores et ea rebum. Stet clita kasd gubergren, no sea takimata sanctus est Lorem ipsum dolor</p>
              <p>sit amet. Lorem ipsum dolor sit amet, consetetur sadipscing elitr, sed diam nonumy eirmod tempor invidunt ut labore et dolore</p>
              <p>magna aliquyam erat, sed diam voluptua. At vero eos et accusam et justo duo dolores et ea rebum. Stet clita kasd gubergren, no</p>
              <p>sea takimata sanctus est Lorem ipsum dolor sit amet.</p>
            </Article>
          </div>
          <Pill className="mt-10 ml-[150px] w-[63px]">Next</Pill>
        </main>
      </div>
    </div>
  );
}
